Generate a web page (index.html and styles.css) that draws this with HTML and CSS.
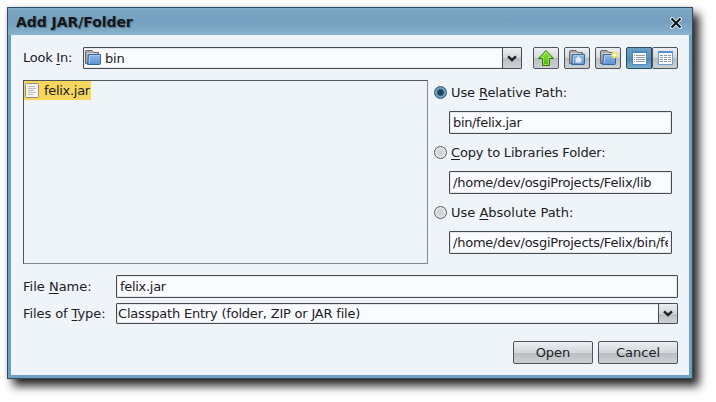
FILE: index.html
```html
<!DOCTYPE html>
<html lang="en">
<head>
<meta charset="utf-8">
<title>Add JAR/Folder</title>
<link rel="stylesheet" href="styles.css">
</head>
<body>
<svg class="defs" width="0" height="0">
  <defs>
    <linearGradient id="blue" x1="0" y1="0" x2="0" y2="1"><stop offset="0" stop-color="#92b9e6"/><stop offset="1" stop-color="#5c93d2"/></linearGradient>
    <linearGradient id="green" x1="0" y1="0" x2="0" y2="1"><stop offset="0" stop-color="#a0e84c"/><stop offset="1" stop-color="#48b010"/></linearGradient>
    <symbol id="folder" viewBox="0 0 16 16">
      <path d="M.5 13.5V1.5Q.5.5 1.500.5H7L9 2.500H13.500V13.500Z" fill="#aaaaa6" stroke="#666"/>
      <path d="M2 3.500H12" stroke="#d2d2ce"/>
      <path d="M3.500 4.500H15.500V13.500Q15.500 14.500 14.500 14.500H2.500Z" fill="url(#blue)" stroke="#3465a4"/>
      <path d="M4.500 13V5.500H14.500" fill="none" stroke="#a8c8ec"/>
    </symbol>
    <symbol id="chevron" viewBox="0 0 10 7"><path d="M1 1.300 5 5 9 1.300" fill="none" stroke="#20262c" stroke-width="2.500"/></symbol>
  </defs>
</svg>
<main class="window">
  <header class="titlebar">
    <h1>Add JAR/Folder</h1>
    <svg class="close" width="12" height="12" viewBox="0 0 12 12"><path d="M2 2 10 10M10 2 2 10" stroke="#d8e8f0" stroke-width="4" stroke-linecap="square"/><path d="M1.500 1.500 10.500 10.500M10.500 1.500 1.500 10.500" stroke="#0c1114" stroke-width="2"/></svg>
  </header>
  <section class="content">
    <div class="lookrow">
      <label class="lookin"><span>Look <u>I</u>n:</span></label>
      <div class="combo place">
        <svg class="foldericon" width="16" height="16"><use href="#folder"/></svg><span class="value">bin</span>
        <button class="drop"><svg width="10" height="7"><use href="#chevron"/></svg></button>
      </div>
      <div class="tools">
        <button class="tool"><svg width="18" height="18" viewBox="0 0 18 18"><path d="M9 1.500 16.500 9.500H12.500V16.500H5.500V9.500H1.500Z" fill="url(#green)" stroke="#2e7c08"/><path d="M9 3 14 8.500H11.500V15.500H6.500V8.500H4Z" fill="none" stroke="#b6f070" stroke-opacity=".65"/></svg></button>
        <button class="tool"><svg width="16" height="16" viewBox="0 0 16 16"><use href="#folder"/><path d="M9.500 6 13.500 9.700H12.300V12.700H6.700V9.700H5.500Z" fill="#e6ebf2" stroke="#a4bcd8" stroke-width=".6"/></svg></button>
        <button class="tool"><svg class="newicon" width="18" height="16" viewBox="0 0 18 16"><use href="#folder" width="16" height="16"/><circle cx="14.500" cy="5" r="3.200" fill="#f2d84c" opacity=".9"/><path d="M14.500 2V8M11.500 5H17.500" stroke="#fff6a8"/><circle cx="14.500" cy="5" r="1.500" fill="#fffdd8"/></svg></button>
        <div class="views">
          <button class="tool selected"><svg width="15" height="14" viewBox="0 0 15 14"><path d="M.5.5H14.500V13.500H.5Z" fill="#fafcff" stroke="#4d86c9"/><path d="M0 1H15" stroke="#4d86c9" stroke-width="2"/><path d="M2 4.500H3M2 6.500H3M2 8.500H3M2 10.500H3M4 4.500H13M4 6.500H13M4 8.500H13M4 10.500H13" stroke="#8e9aac"/></svg></button>
          <button class="tool"><svg width="15" height="14" viewBox="0 0 15 14"><path d="M.5.5H14.500V13.500H.5Z" fill="#fafcff" stroke="#6d9bd4"/><path d="M0 1H15" stroke="#5b90d0" stroke-width="2"/><path d="M2 4.500H5M6 4.500H9M10 4.500H13M2 6.500H5M6 6.500H9M10 6.500H13M2 8.500H5M6 8.500H9M10 8.500H13M2 10.500H5M6 10.500H9M10 10.500H13" stroke="#8e9aac"/></svg></button>
        </div>
      </div>
    </div>
    <div class="middle">
      <div class="filelist">
        <div class="file"><svg width="15" height="16" viewBox="0 0 15 16"><rect x=".5" y=".5" width="13" height="14" rx="1" fill="#f4f4f2" stroke="#8e8e8a"/><path d="M3 3.500H10M3 5.500H11M3 7.500H9M3 9.500H11M3 11.500H8" stroke="#bdbdb9"/></svg><span>felix.jar</span></div>
      </div>
      <div class="options">
        <label class="option"><i class="radio on"></i><span class="relative">Use <u>R</u>elative Path:</span></label>
        <div class="field path"><span class="short">bin/felix.jar</span></div>
        <label class="option"><i class="radio"></i><span class="copy"><u>C</u>opy to Libraries Folder:</span></label>
        <div class="field path"><span>/home/dev/osgiProjects/Felix/lib</span></div>
        <label class="option"><i class="radio"></i><span>Use <u>A</u>bsolute Path:</span></label>
        <div class="field path"><span>/home/dev/osgiProjects/Felix/bin/felix.jar</span></div>
      </div>
    </div>
    <div class="form">
      <label>File <u>N</u>ame:</label>
      <div class="field name">felix.jar</div>
      <label class="typelabel">Files of <u>T</u>ype:</label>
      <div class="combo type"><span class="value">Classpath Entry (folder, ZIP or JAR file)</span><button class="drop"><svg width="10" height="7"><use href="#chevron"/></svg></button></div>
    </div>
    <footer class="actions"><button>Open</button><button>Cancel</button></footer>
  </section>
</main>
</body>
</html>
```
FILE: styles.css
```css
* { box-sizing: border-box; }
body { margin: 0; width: 716px; height: 402px; overflow: hidden; background: #fff; padding: 7px; color: #1c2024; font: 13px/16px "DejaVu Sans", sans-serif; }
.defs { position: absolute; }
svg { display: block; flex: none; }
button { font: inherit; color: inherit; margin: 0; padding: 0; }
.window { width: 686px; height: 372px; border: 1px solid #2b4d67; background: #6fa0c0; padding: 0 3px 3px; box-shadow: 6px 7px 9px 0 rgba(0,0,0,.85), 0 0 4px rgba(0,0,0,.12); }
.titlebar { height: 27px; margin: 0 -3px; padding: 0 10px 0 8px; display: flex; align-items: center; justify-content: space-between; background: linear-gradient(#8ab4cd 0, #7ba6c3 8%, #749fbe 50%, #87b2cd 100%); }
h1 { margin: 0; font-size: 14px; line-height: 18px; font-weight: bold; letter-spacing: -.06px; color: #14181c; text-shadow: 1px 1px 1px #54758c; }
.close { margin-top: 2px; }
.content { height: 340px; background: #eff4f9; padding: 12px 11px 11px 12px; }
.lookrow { display: flex; height: 22px; }
.lookin { width: 60px; line-height: 22px; white-space: nowrap; letter-spacing: -.25px; }
u { text-decoration-thickness: 1px; text-underline-offset: 2px; }
.combo, .field { border: 1px solid #484c52; border-radius: 1px; background: #f9fbff; box-shadow: inset 0 0 0 1px #e4e6eb; overflow: hidden; white-space: nowrap; }
.combo { display: flex; align-items: center; }
.value { flex: 1; letter-spacing: -.2px; }
.place { width: 439px; }
.place .value { padding-top: 1px; }
.foldericon { margin: 0 4px 0 1px; }
.drop { width: 19px; align-self: stretch; display: grid; place-items: center; border: 0; border-left: 1px solid #484c52; }
.drop, .tool, .actions button { background: linear-gradient(#eceff2 0, #d2d7db 50%, #b8bdc2 51%, #c6cacd 80%, #cbcfd2 100%); }
.tools { display: flex; gap: 5px; margin-left: 11px; }
.tool { width: 26px; height: 22px; border: 1px solid #50545a; border-radius: 2px; display: grid; place-items: center; }
.newicon { margin-left: 2px; }
.views { display: flex; }
.tool.selected { background: linear-gradient(#69a0c1, #5e91b3 50%, #5486aa 51%, #7caccb); border-color: #294b64; border-radius: 2px 0 0 2px; }
.middle { display: flex; height: 184px; margin-top: 11px; }
.filelist { width: 405px; border: 1px solid #50545a; border-right-color: #848a91; border-bottom-color: #848a91; }
.file { display: flex; align-items: center; width: 67px; height: 19px; padding-left: 1px; background: #f6d65b; }
.file span { margin-left: 4px; letter-spacing: -.3px; }
.options { margin-left: 6px; width: 238px; }
.option { display: flex; align-items: center; height: 25px; margin-bottom: 6px; gap: 4px; white-space: nowrap; }
.relative { letter-spacing: -.1px; }
.copy { letter-spacing: -.18px; }
.radio { width: 13px; height: 13px; border: 1px solid #595e64; border-radius: 50%; background: radial-gradient(#d2d4d7 0 35%, #e8eaed 65%, #9da2a7 100%); }
.radio.on { border-color: #35556c; background: radial-gradient(#24435a 0 2px, #30516a 3px, #6fa6ca 4px, #5c90b3 6px); }
.path { width: 223px; height: 23px; margin: 0 0 6px 15px; padding: 3px 3px 0; }
.path span { display: block; overflow: hidden; letter-spacing: -.23px; }
.path .short { letter-spacing: -.35px; }
.form { display: grid; grid-template-columns: 93px 562px; grid-template-rows: 23px 21px; row-gap: 5px; margin-top: 11px; }
.form label { line-height: 23px; }
.form .typelabel { line-height: 21px; letter-spacing: -.08px; }
.name { padding: 3px 3px 0; letter-spacing: -.3px; }
.type { padding-left: 1px; }
.actions { display: flex; justify-content: flex-end; gap: 5px; margin-top: 17px; }
.actions button { width: 80px; height: 23px; border: 1px solid #50545a; border-radius: 2px; }
```
